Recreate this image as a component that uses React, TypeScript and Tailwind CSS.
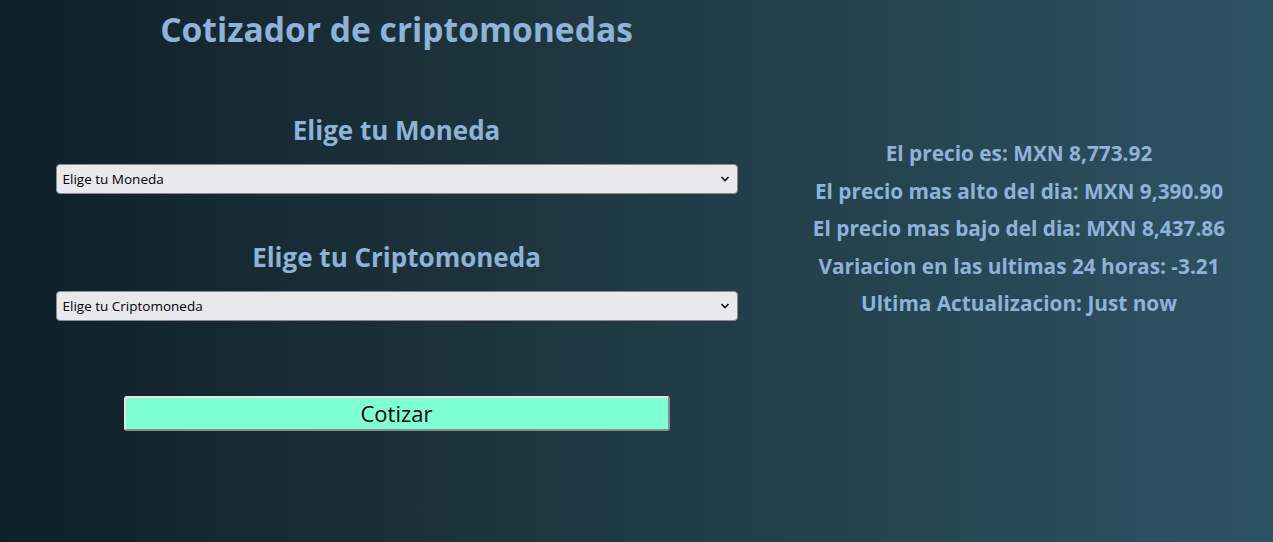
import React from "react";

function Chevron() {
  return (
    <svg
      className="pointer-events-none absolute right-[8px] top-1/2 -translate-y-1/2"
      width="10"
      height="7"
      viewBox="0 0 10 7"
      fill="none"
    >
      <path d="M1.5 1.5 L5 5 L8.5 1.5" stroke="#111" strokeWidth="1.6" />
    </svg>
  );
}

function Field({ label, placeholder }: { label: string; placeholder: string }) {
  return (
    <div className="flex w-full flex-col items-center">
      <h2 className="text-[26px] leading-[33px] font-bold text-[#8fb3d8]">{label}</h2>
      <div className="relative mt-[17px] w-[682px]">
        <select
          className="block h-[29.5px] w-full appearance-none rounded-[4px] border border-[#8a8a8f] bg-[#e9e8ed] pl-[6px] text-[13.5px] text-black outline-none"
          style={{ fontFamily: '"Open Sans", sans-serif' }}
          defaultValue=""
        >
          <option value="">{placeholder}</option>
        </select>
        <Chevron />
      </div>
    </div>
  );
}

export default function App() {
  return (
    <div
      className="relative h-[542px] w-full overflow-hidden bg-[linear-gradient(to_right,#0f2027,#203a43,#2c5364)]"
      style={{ fontFamily: '"Open Sans", sans-serif' }}
    >
      <div className="flex">
        <div className="flex w-[793px] flex-col items-center">
          <h1 className="mt-[7px] text-[33.6px] leading-[44px] font-bold text-[#8fb3d8]">
            Cotizador de criptomonedas
          </h1>
          <div className="mt-[63px] w-full">
            <Field label="Elige tu Moneda" placeholder="Elige tu Moneda" />
          </div>
          <div className="mt-[47.5px] w-full">
            <Field label="Elige tu Criptomoneda" placeholder="Elige tu Criptomoneda" />
          </div>
          <button className="mt-[75px] h-[35px] w-[546px] rounded-[3px] border-2 border-t-[#e4e4e4] border-l-[#e4e4e4] border-r-[#8a8a8a] border-b-[#8a8a8a] bg-[#7fffd4] text-[22px] leading-none text-black">
            Cotizar
          </button>
        </div>
        <div className="flex w-[452px] flex-col items-center pt-[135px] text-[20.8px] leading-[37.5px] font-bold text-[#8fb3d8]">
          <p>El precio es: MXN 8,773.92</p>
          <p>El precio mas alto del dia: MXN 9,390.90</p>
          <p>El precio mas bajo del dia: MXN 8,437.86</p>
          <p>Variacion en las ultimas 24 horas: -3.21</p>
          <p>Ultima Actualizacion: Just now</p>
        </div>
      </div>
    </div>
  );
}
